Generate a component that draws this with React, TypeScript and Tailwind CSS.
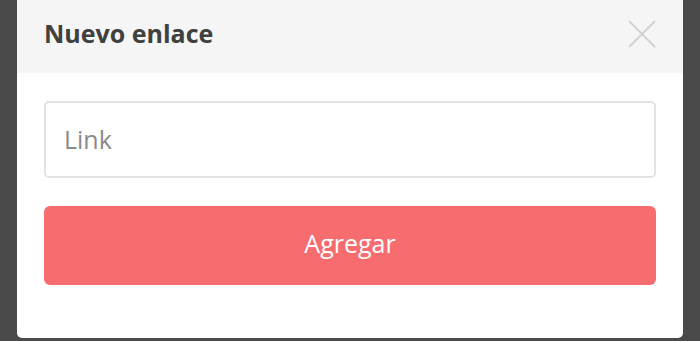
export default function App() {
  return (
    <div className="h-[341px] w-[700px] bg-[#4a4a4a] pl-[17px] pr-[17px] pb-[3px] font-['Open_Sans',sans-serif]">
      <div className="flex h-full flex-col overflow-hidden rounded-b-[5px] bg-white">
        {/* Header */}
        <div className="flex h-[73px] items-center justify-between bg-[#f5f5f5] pb-[6px] pl-[27px] pr-[26px]">
          <h2 className="text-[25px] font-bold text-[#404040]">Nuevo enlace</h2>
          <button className="flex h-[30px] w-[30px] items-center justify-center text-[#d2d2d2]">
            <svg width="28" height="28" viewBox="0 0 28 28" fill="none" stroke="currentColor" strokeWidth="2">
              <path d="M1 1L27 27M27 1L1 27" />
            </svg>
          </button>
        </div>

        {/* Body */}
        <div className="flex flex-col gap-[28px] px-[27px] pt-[28px]">
          <input
            type="text"
            placeholder="Link"
            className="h-[77px] w-full rounded-[5px] border-2 border-[#e2e2e2] px-[18px] pb-[2px] text-[25px] text-[#444] placeholder:text-[#8a8a8a] outline-none"
          />
          <button className="h-[79px] w-full rounded-[6px] bg-[#f76c6f] pb-[4px] text-[25px] text-white">
            Agregar
          </button>
        </div>
      </div>
    </div>
  );
}
